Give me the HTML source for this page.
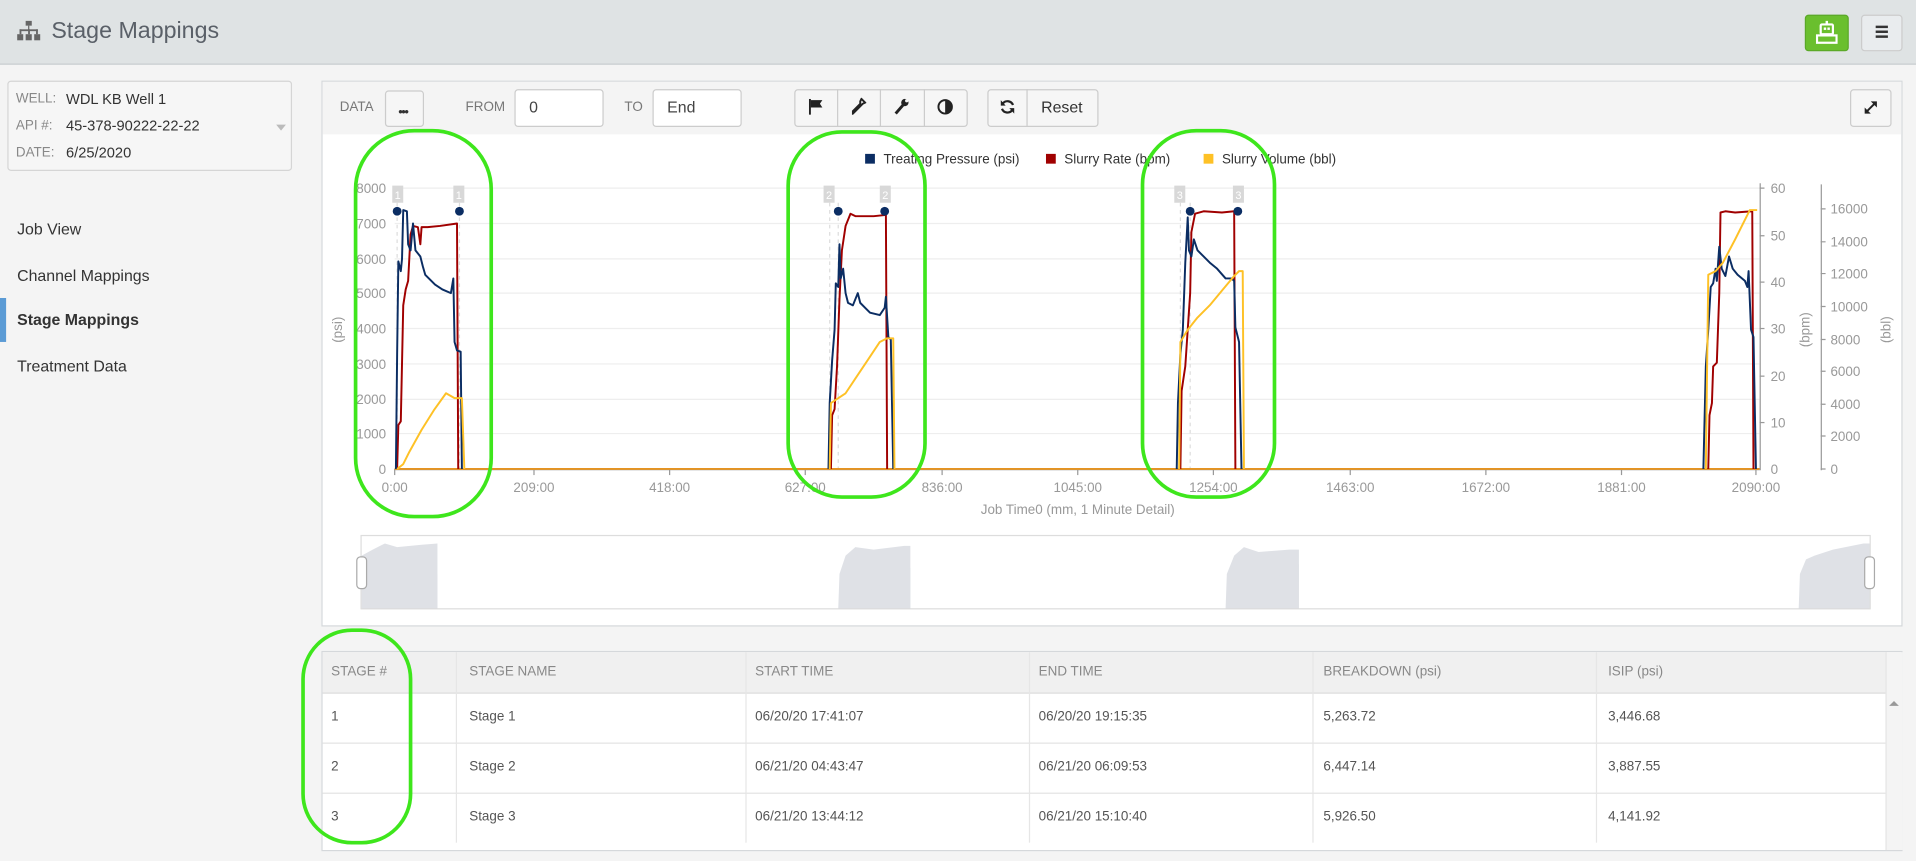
<!DOCTYPE html>
<html><head><meta charset="utf-8"><style>
html,body{margin:0;padding:0;width:1916px;height:861px;overflow:hidden;background:#f4f4f4;font-family:"Liberation Sans",sans-serif;}
#w{position:absolute;left:0;top:0;width:1568px;height:705px;transform:scale(1.22194,1.22128);transform-origin:0 0;background:#f4f4f4;}
.a{position:absolute;}
.hdr{left:0;top:0;width:1568px;height:52px;background:#dfe3e4;border-bottom:1px solid #c9cdd0;}
.btn{position:absolute;background:#f6f6f6;border:1px solid #ccc;border-radius:3px;box-sizing:border-box;}
.lbl{font-size:11px;color:#888;}
.nav{position:absolute;left:14px;font-size:13px;color:#333;}
.tb{position:absolute;font-size:11px;color:#777;}
.cell{position:absolute;font-size:11px;color:#555;}
</style></head><body><div id="w">
<div class="a hdr"></div>
<svg class="a" style="left:14px;top:17px" width="19" height="17" viewBox="0 0 19 17"><rect x="7" y="0" width="5" height="4" fill="#666"/><rect x="9" y="4" width="1" height="4" fill="#666"/><rect x="2" y="7" width="15" height="1.5" fill="#666"/><rect x="2" y="7" width="1.5" height="4" fill="#666"/><rect x="15.5" y="7" width="1.5" height="4" fill="#666"/><rect x="9" y="7" width="1.5" height="4" fill="#666"/><rect x="0" y="11" width="5" height="5" fill="#666"/><rect x="7" y="11" width="5" height="5" fill="#666"/><rect x="14" y="11" width="5" height="5" fill="#666"/></svg>
<div class="a" style="left:42px;top:15px;font-size:19px;color:#5a6068">Stage Mappings</div>
<div class="a" style="left:1477px;top:12px;width:36px;height:30px;background:#6abf2e;border-radius:3px;border:1px solid #5aa828;box-sizing:border-box"></div>
<svg class="a" style="left:1486px;top:17px" width="18" height="20" viewBox="0 0 18 20"><rect x="8" y="0" width="2" height="3" fill="#fff"/><rect x="4" y="3" width="10" height="8" rx="1" fill="none" stroke="#fff" stroke-width="1.8"/><rect x="6.5" y="5.5" width="2" height="2" fill="#fff"/><rect x="9.5" y="5.5" width="2" height="2" fill="#fff"/><rect x="1" y="12" width="16" height="6" fill="none" stroke="#fff" stroke-width="1.8"/></svg>
<div class="btn" style="left:1523px;top:12px;width:34px;height:30px;background:#e9ecee"></div>
<div class="a" style="left:1535px;top:21px;width:10px;height:2px;background:#333;box-shadow:0 4px 0 #333,0 8px 0 #333"></div>

<div class="a" style="left:6px;top:66px;width:233px;height:74px;background:#f6f6f6;border:1px solid #d5d5d5;border-radius:3px;box-sizing:border-box"></div>
<div class="a lbl" style="left:13px;top:75px">WELL:</div><div class="a" style="left:54px;top:74px;font-size:12px;color:#333">WDL KB Well 1</div>
<div class="a lbl" style="left:13px;top:97px">API #:</div><div class="a" style="left:54px;top:96px;font-size:12px;color:#333">45-378-90222-22-22</div>
<div class="a lbl" style="left:13px;top:119px">DATE:</div><div class="a" style="left:54px;top:118px;font-size:12px;color:#333">6/25/2020</div>
<div class="a" style="left:226px;top:102px;width:0;height:0;border-left:4px solid transparent;border-right:4px solid transparent;border-top:5px solid #bbb"></div>
<div class="nav" style="top:180px">Job View</div>
<div class="nav" style="top:218px">Channel Mappings</div>
<div class="a" style="left:0;top:244px;width:5px;height:36px;background:#5b9bd5"></div>
<div class="nav" style="top:254px;font-weight:bold">Stage Mappings</div>
<div class="nav" style="top:292px">Treatment Data</div>

<div class="a" style="left:263px;top:66px;width:1294px;height:447px;background:#fff;border:1px solid #d5d8db;box-sizing:border-box"></div>
<div class="a" style="left:264px;top:67px;width:1292px;height:43px;background:#f4f4f4"></div>
<div class="tb" style="left:278px;top:82px">DATA</div>
<div class="btn" style="left:315px;top:74px;width:32px;height:30px"></div>
<div class="a" style="left:326px;top:87px;font-size:10px;font-weight:bold;color:#333;letter-spacing:-1px">•••</div>
<div class="tb" style="left:381px;top:82px">FROM</div>
<div class="btn" style="left:421px;top:73px;width:73px;height:31px;background:#fff"></div><div class="a" style="left:433px;top:80px;font-size:13px;color:#444">0</div>
<div class="tb" style="left:511px;top:82px">TO</div>
<div class="btn" style="left:534px;top:73px;width:73px;height:31px;background:#fff"></div><div class="a" style="left:546px;top:80px;font-size:13px;color:#444">End</div>
<div class="btn" style="left:650px;top:73px;width:142px;height:31px"></div>
<div class="a" style="left:685px;top:73px;width:1px;height:31px;background:#ccc"></div>
<div class="a" style="left:720px;top:73px;width:1px;height:31px;background:#ccc"></div>
<div class="a" style="left:756px;top:73px;width:1px;height:31px;background:#ccc"></div>
<svg class="a" style="left:662px;top:81px" width="12" height="13" viewBox="0 0 12 13"><rect x="0" y="0" width="1.6" height="13" fill="#222"/><path d="M1.5 1 L11 1 L9 4 L11 7 L1.5 7Z" fill="#222"/></svg>
<svg class="a" style="left:697px;top:80px" width="12" height="14" viewBox="0 0 12 14"><path d="M8 1 L11 4 L9 5 L3 11 L1 13 L1 11 L7 5 L7 3Z" fill="none" stroke="#222" stroke-width="1.6"/></svg>
<svg class="a" style="left:732px;top:80px" width="12" height="14" viewBox="0 0 12 14"><path d="M1 13 L7 6" stroke="#222" stroke-width="2.4"/><circle cx="8.5" cy="4" r="3" fill="#222"/><circle cx="10" cy="2.5" r="1.3" fill="#f6f6f6"/></svg>
<svg class="a" style="left:767px;top:81px" width="13" height="13" viewBox="0 0 13 13"><circle cx="6.5" cy="6.5" r="5.5" fill="none" stroke="#222" stroke-width="1.6"/><path d="M6.5 1 A5.5 5.5 0 0 1 6.5 12Z" fill="#222"/></svg>
<div class="btn" style="left:808px;top:73px;width:91px;height:31px"></div>
<div class="a" style="left:840px;top:73px;width:1px;height:31px;background:#ccc"></div>
<svg class="a" style="left:818px;top:81px" width="13" height="13" viewBox="0 0 13 13"><path d="M11 5 A4.8 4.8 0 0 0 2.5 4" fill="none" stroke="#222" stroke-width="1.8"/><path d="M2 8 A4.8 4.8 0 0 0 10.5 9" fill="none" stroke="#222" stroke-width="1.8"/><path d="M1 1 L1 5.5 L5 5.5Z" fill="#222"/><path d="M12 12 L12 7.5 L8 7.5Z" fill="#222"/></svg>
<div class="a" style="left:852px;top:80px;font-size:13px;color:#333">Reset</div>
<div class="btn" style="left:1514px;top:73px;width:34px;height:31px"></div>
<svg class="a" style="left:1525px;top:82px" width="12" height="12" viewBox="0 0 12 12"><path d="M2 10 L10 2" stroke="#222" stroke-width="1.6"/><path d="M6 1 L11 1 L11 6Z M1 6 L1 11 L6 11Z" fill="#222"/></svg>

<svg class="a" style="left:263px;top:110px" width="1294" height="400" viewBox="263 110 1294 400" font-family="Liberation Sans, sans-serif">
<g font-size="11" fill="#333">
<rect x="708" y="126" width="8" height="8" fill="#0b2d63"/><text x="723" y="134">Treating Pressure (psi)</text>
<rect x="856" y="126" width="8" height="8" fill="#a00000"/><text x="871" y="134">Slurry Rate (bpm)</text>
<rect x="985" y="126" width="8" height="8" fill="#fec126"/><text x="1000" y="134">Slurry Volume (bbl)</text>
</g>
<g stroke="#eeeeee" stroke-width="1">
<line x1="323" x2="1440" y1="154" y2="154"/><line x1="323" x2="1440" y1="183" y2="183"/><line x1="323" x2="1440" y1="212" y2="212"/><line x1="323" x2="1440" y1="240" y2="240"/><line x1="323" x2="1440" y1="269" y2="269"/><line x1="323" x2="1440" y1="298" y2="298"/><line x1="323" x2="1440" y1="327" y2="327"/><line x1="323" x2="1440" y1="355" y2="355"/>
</g>
<line x1="323" x2="1440" y1="384.5" y2="384.5" stroke="#999"/>
<g font-size="11" fill="#999" text-anchor="end">
<text x="316" y="158">8000</text><text x="316" y="187">7000</text><text x="316" y="216">6000</text><text x="316" y="244">5000</text><text x="316" y="273">4000</text><text x="316" y="302">3000</text><text x="316" y="331">2000</text><text x="316" y="359">1000</text><text x="316" y="388">0</text>
</g>
<text transform="translate(280,270) rotate(-90)" font-size="11" fill="#999" text-anchor="middle">(psi)</text>
<g font-size="11" fill="#999" text-anchor="middle">
<text x="323" y="403">0:00</text><text x="437" y="403">209:00</text><text x="548" y="403">418:00</text><text x="659" y="403">627:00</text><text x="771" y="403">836:00</text><text x="882" y="403">1045:00</text><text x="993" y="403">1254:00</text><text x="1105" y="403">1463:00</text><text x="1216" y="403">1672:00</text><text x="1327" y="403">1881:00</text><text x="1437" y="403">2090:00</text>
<text x="882" y="421">Job Time0 (mm, 1 Minute Detail)</text>
</g>
<g stroke="#999"><line x1="323" x2="323" y1="384" y2="389"/><line x1="437" x2="437" y1="384" y2="389"/><line x1="548" x2="548" y1="384" y2="389"/><line x1="659" x2="659" y1="384" y2="389"/><line x1="771" x2="771" y1="384" y2="389"/><line x1="882" x2="882" y1="384" y2="389"/><line x1="993" x2="993" y1="384" y2="389"/><line x1="1105" x2="1105" y1="384" y2="389"/><line x1="1216" x2="1216" y1="384" y2="389"/><line x1="1327" x2="1327" y1="384" y2="389"/><line x1="1437" x2="1437" y1="384" y2="389"/></g>
<line x1="1440.5" x2="1440.5" y1="150" y2="385" stroke="#999"/>
<g stroke="#999"><line x1="1440" x2="1444" y1="154" y2="154"/><line x1="1440" x2="1444" y1="193" y2="193"/><line x1="1440" x2="1444" y1="231" y2="231"/><line x1="1440" x2="1444" y1="269" y2="269"/><line x1="1440" x2="1444" y1="308" y2="308"/><line x1="1440" x2="1444" y1="346" y2="346"/></g>
<g font-size="11" fill="#999"><text x="1449" y="158">60</text><text x="1449" y="197">50</text><text x="1449" y="235">40</text><text x="1449" y="273">30</text><text x="1449" y="312">20</text><text x="1449" y="350">10</text><text x="1449" y="388">0</text></g>
<text transform="translate(1481,270) rotate(-90)" font-size="11" fill="#999" text-anchor="middle">(bpm)</text>
<line x1="1490.5" x2="1490.5" y1="151" y2="385" stroke="#999"/>
<g font-size="11" fill="#999"><text x="1498" y="175">16000</text><text x="1498" y="202">14000</text><text x="1498" y="228">12000</text><text x="1498" y="255">10000</text><text x="1498" y="282">8000</text><text x="1498" y="308">6000</text><text x="1498" y="335">4000</text><text x="1498" y="361">2000</text><text x="1498" y="388">0</text></g>
<text transform="translate(1547,270) rotate(-90)" font-size="11" fill="#999" text-anchor="middle">(bbl)</text>
<g stroke="#999"><line x1="1490" x2="1494" y1="171" y2="171"/><line x1="1490" x2="1494" y1="198" y2="198"/><line x1="1490" x2="1494" y1="224" y2="224"/><line x1="1490" x2="1494" y1="251" y2="251"/><line x1="1490" x2="1494" y1="278" y2="278"/><line x1="1490" x2="1494" y1="304" y2="304"/><line x1="1490" x2="1494" y1="331" y2="331"/><line x1="1490" x2="1494" y1="357" y2="357"/><line x1="1490" x2="1494" y1="384" y2="384"/></g>
<g stroke="#ddd" stroke-dasharray="3,3"><line x1="325" x2="325" y1="166" y2="384"/><line x1="376" x2="376" y1="166" y2="384"/><line x1="679" x2="679" y1="166" y2="384"/><line x1="686" x2="686" y1="166" y2="384"/><line x1="966" x2="966" y1="166" y2="384"/><line x1="974" x2="974" y1="166" y2="384"/></g>
<line x1="323" x2="1440" y1="384" y2="384" stroke="#e69320" stroke-width="1.5"/>
<g fill="none" stroke-width="1.6" stroke-linejoin="round">
<polyline stroke="#a00000" points="325,384 326,348 328,345 330,250 332,237 334,230 336,192 338,185 342,186 344,200 345,186 350,186 360,185 374,183 375,384"/>
<polyline stroke="#0b2d63" points="324,384 325,290 326,214 328,222 329,212 330,172 333,173 334,200 336,205 338,183 340,205 344,210 346,218 348,225 352,229 356,233 362,237 369,240 371,228 372,280 374,287 377,288 378,384"/>
<polyline stroke="#fec126" points="325,384 330,380 335,370 345,352 355,336 365,322 372,326 378,326 380,384"/>
<polyline stroke="#a00000" points="680,384 681,340 683,335 685,300 687,245 689,205 692,185 696,175 700,177 715,177 725,176 726,384"/>
<polyline stroke="#0b2d63" points="678,384 679,330 681,295 683,270 684,232 686,235 687,200 688,228 690,220 692,240 694,248 698,250 702,240 704,248 708,252 712,256 720,258 724,252 725,243 727,276 729,278 731,384"/>
<polyline stroke="#fec126" points="679,384 680,330 686,326 692,322 700,310 710,295 720,280 726,277 731,277 732,384"/>
<polyline stroke="#a00000" points="966,384 967,320 970,300 972,270 974,240 975,190 978,175 985,173 1000,174 1010,173 1011,384"/>
<polyline stroke="#0b2d63" points="963,384 964,330 966,290 968,270 970,215 972,178 973,205 975,210 977,196 980,205 985,210 990,215 996,220 1003,228 1008,228 1010,230 1011,268 1014,280 1016,384"/>
<polyline stroke="#fec126" points="965,384 966,280 972,270 980,260 990,250 1000,238 1010,226 1014,222 1017,222 1018,384"/>
<polyline stroke="#a00000" points="1398,384 1399,340 1401,330 1402,300 1405,297 1407,240 1408,174 1412,173 1420,174 1434,173 1435,384"/>
<polyline stroke="#0b2d63" points="1394,384 1396,300 1398,270 1400,235 1402,232 1404,220 1405,230 1407,202 1409,220 1412,226 1415,210 1418,220 1422,225 1428,230 1430,235 1431,222 1433,270 1435,276 1437,384"/>
<polyline stroke="#fec126" points="1396,384 1398,225 1404,222 1410,215 1420,196 1432,172 1438,172"/>
</g>
<g fill="#0b2d63"><circle cx="325" cy="173" r="3.6"/><circle cx="376" cy="173" r="3.6"/><circle cx="686" cy="173" r="3.6"/><circle cx="724" cy="173" r="3.6"/><circle cx="974" cy="173" r="3.6"/><circle cx="1013" cy="173" r="3.6"/></g>
<g fill="#d8d8d8"><rect x="321" y="152" width="9" height="14"/><rect x="371" y="152" width="9" height="14"/><rect x="674" y="152" width="9" height="14"/><rect x="720" y="152" width="9" height="14"/><rect x="961" y="152" width="9" height="14"/><rect x="1009" y="152" width="9" height="14"/></g>
<g fill="#fff" font-size="9" text-anchor="middle"><text x="325.5" y="163">1</text><text x="375.5" y="163">1</text><text x="678.5" y="163">2</text><text x="724.5" y="163">2</text><text x="965.5" y="163">3</text><text x="1013.5" y="163">3</text></g>
<rect x="295.5" y="438.5" width="1235" height="60" fill="#fff" stroke="#ddd"/>
<g fill="#c5cad3" opacity="0.55">
<path d="M296 498 L296 455 L305 450 L315 445 L325 448 L345 446 L358 445 L358 498Z"/>
<path d="M686 498 L687 470 L692 455 L700 448 L715 450 L740 447 L745 447 L745 498Z"/>
<path d="M1003 498 L1004 470 L1010 455 L1018 448 L1030 452 L1055 450 L1063 450 L1063 498Z"/>
<path d="M1472 498 L1473 470 L1478 458 L1485 455 L1500 450 L1525 445 L1530 445 L1530 498Z"/>
<path d="M296 498 L358 470 L358 498Z"/>
<path d="M686 498 L745 465 L745 498Z"/>
<path d="M1003 498 L1063 462 L1063 498Z"/>
<path d="M1472 498 L1530 450 L1530 498Z"/>
</g>
<rect x="292" y="456" width="8" height="26" rx="3" fill="#fff" stroke="#aaa"/>
<rect x="1526" y="456" width="8" height="26" rx="3" fill="#fff" stroke="#aaa"/>
</svg>

<div class="a" style="left:263px;top:533px;width:1294px;height:164px;background:#fff;border:1px solid #d5d8db;box-sizing:border-box"></div>
<div class="a" style="left:264px;top:534px;width:1279px;height:33px;background:#f0f0f0;border-bottom:1px solid #ddd"></div>
<div class="a" style="left:1543px;top:534px;width:13px;height:162px;background:#f4f4f4;border-left:1px solid #e5e5e5"></div>
<div class="a" style="left:1546px;top:574px;width:0;height:0;border-left:4px solid transparent;border-right:4px solid transparent;border-bottom:4px solid #999"></div>
<div class="a" style="left:264px;top:608px;width:1279px;height:1px;background:#e3e3e3"></div>
<div class="a" style="left:264px;top:649px;width:1279px;height:1px;background:#e3e3e3"></div>
<div class="a" style="left:373px;top:534px;width:1px;height:156px;background:#e6e6e6"></div>
<div class="a" style="left:610px;top:534px;width:1px;height:156px;background:#e6e6e6"></div>
<div class="a" style="left:842px;top:534px;width:1px;height:156px;background:#e6e6e6"></div>
<div class="a" style="left:1074px;top:534px;width:1px;height:156px;background:#e6e6e6"></div>
<div class="a" style="left:1306px;top:534px;width:1px;height:156px;background:#e6e6e6"></div>
<div class="cell" style="left:271px;top:544px;color:#888">STAGE #</div>
<div class="cell" style="left:384px;top:544px;color:#888">STAGE NAME</div>
<div class="cell" style="left:618px;top:544px;color:#888">START TIME</div>
<div class="cell" style="left:850px;top:544px;color:#888">END TIME</div>
<div class="cell" style="left:1083px;top:544px;color:#888">BREAKDOWN (psi)</div>
<div class="cell" style="left:1316px;top:544px;color:#888">ISIP (psi)</div>
<div class="cell" style="left:271px;top:581px">1</div><div class="cell" style="left:384px;top:581px">Stage 1</div><div class="cell" style="left:618px;top:581px">06/20/20 17:41:07</div><div class="cell" style="left:850px;top:581px">06/20/20 19:15:35</div><div class="cell" style="left:1083px;top:581px">5,263.72</div><div class="cell" style="left:1316px;top:581px">3,446.68</div>
<div class="cell" style="left:271px;top:622px">2</div><div class="cell" style="left:384px;top:622px">Stage 2</div><div class="cell" style="left:618px;top:622px">06/21/20 04:43:47</div><div class="cell" style="left:850px;top:622px">06/21/20 06:09:53</div><div class="cell" style="left:1083px;top:622px">6,447.14</div><div class="cell" style="left:1316px;top:622px">3,887.55</div>
<div class="cell" style="left:271px;top:663px">3</div><div class="cell" style="left:384px;top:663px">Stage 3</div><div class="cell" style="left:618px;top:663px">06/21/20 13:44:12</div><div class="cell" style="left:850px;top:663px">06/21/20 15:10:40</div><div class="cell" style="left:1083px;top:663px">5,926.50</div><div class="cell" style="left:1316px;top:663px">4,141.92</div>

<svg class="a" style="left:0;top:0" width="1568" height="705">
<g fill="none" stroke="#3ee61c" stroke-width="3">
<rect x="291" y="107" width="111" height="316" rx="48"/>
<rect x="645" y="108" width="112" height="299" rx="44"/>
<rect x="935" y="107" width="108" height="300" rx="44"/>
<rect x="248" y="516" width="88" height="174" rx="40"/>
</g></svg>
</div></body></html>
